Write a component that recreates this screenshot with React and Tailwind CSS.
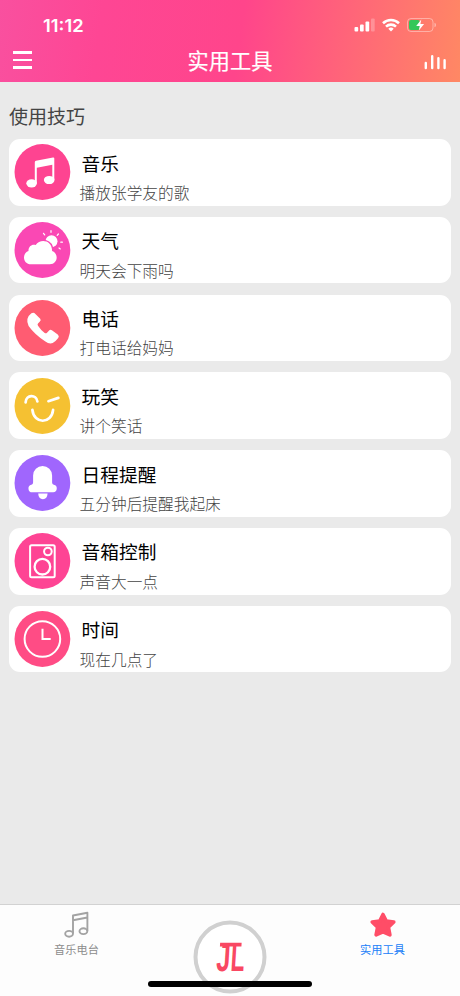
import React, { useState } from 'react';

const TIPS = [
  { id: 'music', title: '音乐', example: '播放张学友的歌', color: '#FE4491', Icon: MusicIcon },
  { id: 'weather', title: '天气', example: '明天会下雨吗', color: '#FA48B4', Icon: WeatherIcon },
  { id: 'phone', title: '电话', example: '打电话给妈妈', color: '#FF5C72', Icon: PhoneIcon },
  { id: 'joke', title: '玩笑', example: '讲个笑话', color: '#F5C132', Icon: JokeIcon },
  { id: 'schedule', title: '日程提醒', example: '五分钟后提醒我起床', color: '#A066FD', Icon: BellIcon },
  { id: 'speaker', title: '音箱控制', example: '声音大一点', color: '#FE4494', Icon: SpeakerIcon },
  { id: 'time', title: '时间', example: '现在几点了', color: '#FF4C85', Icon: ClockIcon },
];

function MusicIcon() {
  return (
    <>
      <path d="M20.2 39V18.2q0-1.2 1.2-1.4l17-3.3q1.3-.2 1.3 1V36h-2V20.8l-15.500 3V39z" fill="#fff" />
      <ellipse cx="17" cy="39.3" rx="5.3" ry="4.1" fill="#fff" />
      <ellipse cx="34.6" cy="36" rx="5.3" ry="4.1" fill="#fff" />
    </>
  );
}

function WeatherIcon() {
  return (
    <>
      <circle cx="36.9" cy="19.3" r="6" fill="#fff" />
      <path d="M28.900 11.300l1.2 1.600M36.400 8.700v1.600M43.800 12l-1.200 1.400M46.200 20.200h1.600M44.400 26l1.300.9" stroke="#fff" strokeWidth="1.2" strokeLinecap="round" />
      <path
        d="M16.500 42.300c-8.600 0-9.300-11-2.600-13.300-.3-4.600 3.600-7.300 7.200-6 4.300-6.600 16.500-5.200 16.400 6 6.800 2.400 6 13.300-2.400 13.300z"
        fill="#fff" stroke="#FA48B4" strokeWidth="2.600" paintOrder="stroke"
      />
    </>
  );
}

function PhoneIcon() {
  return (
    <path
      d="M16.800 13.300q2.300-1.400 4 .6l4.800 4.900q1.200 1.500-.3 2.800l-1.700 1.700q-1.200 1-.2 2.400 2.800 4.300 6.700 7.200 1.300.9 2.300-.2l1.900-2q1.300-1.600 3-.4l5.800 4.200q2 1.600.5 3.600-2.800 3.800-5.500 4.900-3.500 1.300-7.300-1.500Q20 34.500 14 26q-3.700-7.800 2.800-12.700z"
      fill="#fff"
    />
  );
}

function JokeIcon() {
  return (
    <g fill="none" stroke="#fff" strokeWidth="2.700" strokeLinecap="round">
      <path d="M11 24.300c.6-7.800 10.600-8.300 11.800-.8" />
      <path d="M33.800 23.200l10-3.300" />
      <path d="M17.800 31.800c1.500 14.600 19.200 14.600 20.700 0" />
    </g>
  );
}

function BellIcon() {
  return (
    <g fill="#fff">
      <path d="M18.500 20.500a9.500 9.500 0 0 1 19 0v7q0 1.700 1.700 2.300a3.800 3.800 0 0 1-.6 7.500H17.600a3.800 3.800 0 0 1-.8-7.500q1.700-.6 1.700-2.300z" />
      <path d="M23.600 38.500h9.400q-.4 5.700-4.700 5.700t-4.700-5.700z" />
    </g>
  );
}

function SpeakerIcon() {
  return (
    <g fill="none" stroke="#fff" strokeWidth="2">
      <rect x="15.500" y="12.300" width="24.600" height="32" rx="1.500" />
      <circle cx="33.300" cy="18.500" r="3.800" />
      <circle cx="27.800" cy="33.700" r="7.800" strokeWidth="2.300" />
    </g>
  );
}

function ClockIcon() {
  return (
    <g fill="none" stroke="#fff" strokeWidth="2">
      <circle cx="27.800" cy="28" r="17.800" />
      <path d="M27.900 17.800v10.300h8.200" />
    </g>
  );
}

function StatusBar() {
  return (
    <div className="flex h-[38px] items-end justify-between pl-[43px] pr-[23px] text-white">
      <span className="font-[Inter,sans-serif] text-[17.500px] leading-[25px] font-semibold">
        <span className="inline-block origin-left scale-x-[1.050]">11:12</span>
      </span>
      <div className="flex h-[26px] items-center gap-[7px]">
        <svg width="21" height="14" viewBox="0 0 21 14" fill="#fff">
          <rect x="0.500" y="9" width="3.700" height="4.500" rx="1" />
          <rect x="6" y="6.500" width="3.700" height="7" rx="1" />
          <rect x="11.500" y="3.500" width="3.700" height="10" rx="1" />
          <rect x="17" y="0.500" width="3.700" height="13" rx="1" opacity="0.250" />
        </svg>
        <svg width="18" height="14" viewBox="0 0 18 14" fill="none" stroke="#fff" strokeWidth="2.600">
          <path d="M1 5.200a11.600 11.600 0 0 1 16 0" />
          <path d="M4 8.600a7.300 7.300 0 0 1 10 0" />
          <path d="M9 13.500l-2.700-2.700a3.900 3.900 0 0 1 5.400 0z" fill="#fff" stroke="none" />
        </svg>
        <svg width="30" height="14" viewBox="0 0 30 14">
          <rect x="0.500" y="0.500" width="25.500" height="13" rx="3.500" fill="none" stroke="#fff" strokeOpacity="0.400" />
          <path d="M27.500 4.800q1.500.5 1.500 2.200t-1.500 2.200z" fill="#fff" fillOpacity="0.450" />
          <rect x="2" y="2" width="10.800" height="10" rx="2" fill="#34C759" />
          <path d="M14.300 1.500L9.200 7.900h3.600l-1 4.700 5.300-6.500h-3.700z" fill="#fff" />
        </svg>
      </div>
    </div>
  );
}

function Header() {
  return (
    <header className="h-[82px] shrink-0 bg-[linear-gradient(98deg,#f9509f_0%,#fe4694_22%,#ff458b_52%,#ff6579_75%,#ff8864_100%)]">
      <StatusBar />
      <div className="flex h-11 items-center justify-between pr-[13px] pl-[13px] text-white">
        <button className="flex w-[34px] flex-col gap-[5px]">
          <span className="h-[2.400px] w-[19px] bg-white" />
          <span className="h-[2.400px] w-[19px] bg-white" />
          <span className="h-[2.400px] w-[19px] bg-white" />
        </button>
        <h1 className="text-[21.200px] leading-none font-normal [-webkit-text-stroke:0.200px_white]">实用工具</h1>
        <button className="flex w-[34px] justify-end">
          <svg width="23" height="16" viewBox="0 0 23 16" stroke="#fff" strokeWidth="2.400" strokeLinecap="round" className="mt-[3px]">
            <path d="M1.800 9v5M8.200 2.200V14M14.400 4.200V14M20.600 6.200V14" />
          </svg>
        </button>
      </div>
    </header>
  );
}

function TipCard({ tip }) {
  const { Icon } = tip;
  return (
    <li className="flex h-[66.700px] items-center rounded-[11px] bg-white pl-[5px]">
      <svg width="57" height="56" viewBox="-0.600 0 57 56" className="shrink-0">
        <circle cx="27.800" cy="28" r="27.900" fill={tip.color} />
        <Icon />
      </svg>
      <div className="flex h-full flex-col pt-[9.500px] pl-[8.600px]">
        <h3 className="pl-[2px] text-[18.700px] leading-[27px]">{tip.title}</h3>
        <p className="mt-[5.400px] text-[15.700px] leading-[23px] font-light text-[#444]">{tip.example}</p>
      </div>
    </li>
  );
}

function TabBar({ active, onChange }) {
  return (
    <nav className="relative flex h-[92px] shrink-0 border-t border-[#d2d2d2] bg-[#fdfdfd] text-[11.200px]">
      <button onClick={() => onChange('music')} className="flex w-[153px] flex-col items-center pt-[6px]">
        <svg width="26" height="28" viewBox="0 0 26 28" fill="none" stroke="#A3A3A3" strokeWidth="1.900" strokeLinejoin="round">
          <path d="M9 22.500V4.500L23.400 1.800V20M9 9.200l14.400-2.700" />
          <ellipse cx="5.100" cy="22.800" rx="3.900" ry="2.900" />
          <ellipse cx="19.400" cy="20.200" rx="3.900" ry="2.900" />
        </svg>
        <span className={active === 'music' ? 'leading-[20px] text-[#2080F8]' : 'leading-[20px] text-[#8c8c8c]'}>音乐电台</span>
      </button>
      <button className="flex w-[154px] justify-center pt-[15px]">
        <svg width="74" height="74" viewBox="0 0 74 74">
          <circle cx="37" cy="37" r="34.500" fill="#fff" stroke="#D0D0D0" strokeWidth="4" />
          <g transform="translate(3 0) skewX(-3.500)" fill="#F94863" fontFamily="Liberation Sans" fontWeight="bold" fontSize="40">
            <text x="23" y="51.200" textLength="14" lengthAdjust="spacingAndGlyphs">J</text>
            <text x="37.200" y="51.200" textLength="14" lengthAdjust="spacingAndGlyphs">L</text>
            <rect x="25.500" y="22.700" width="21.500" height="3.800" />
          </g>
        </svg>
      </button>
      <button onClick={() => onChange('tools')} className="flex w-[151px] flex-col items-center pt-[6px]">
        <svg width="28" height="28" viewBox="0 0 28 28" fill="#FF4D67" stroke="#FF4D67" strokeWidth="3.600" strokeLinejoin="round">
          <path d="M14 3.500l3.300 6.500 7.500 1-5.400 5.200 1.500 7.700L14 20.900l-6.900 3 1.500-7.700L3.200 11l7.500-1z" />
        </svg>
        <span className={active === 'tools' ? 'leading-[20px] text-[#2080F8]' : 'leading-[20px] text-[#8c8c8c]'}>实用工具</span>
      </button>
      {/* home indicator */}
      <div className="absolute bottom-[9px] left-1/2 h-[6px] w-[164px] -translate-x-1/2 rounded-full bg-black" />
    </nav>
  );
}

export default function App() {
  const [tab, setTab] = useState('tools');

  return (
    <div className="flex h-screen w-full flex-col overflow-hidden bg-[#EAEAEA] font-['Noto_Sans_CJK_SC',sans-serif] text-black">
      <Header />
      <main className="flex-1 px-[9px] pt-[20px]">
        <h2 className="text-[19px] leading-[28px] text-[#444]">使用技巧</h2>
        <ul className="mt-[9px] flex flex-col gap-[11.100px]">
          {TIPS.map((tip) => (
            <TipCard key={tip.id} tip={tip} />
          ))}
        </ul>
      </main>
      <TabBar active={tab} onChange={setTab} />
    </div>
  );
}
